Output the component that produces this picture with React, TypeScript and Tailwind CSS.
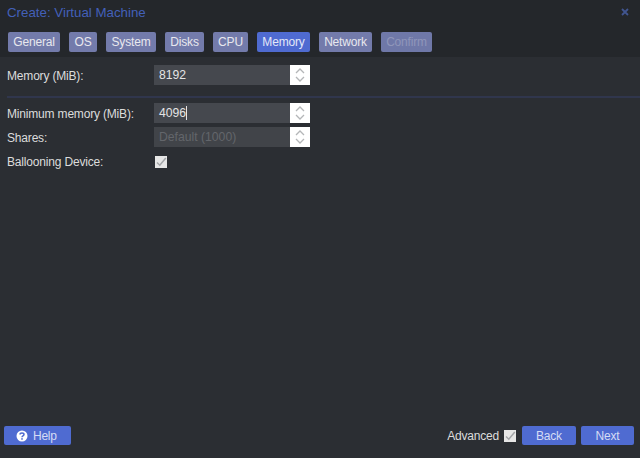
import React from "react";

const tabs = [
  { label: "General", w: "w-[52px]" },
  { label: "OS", w: "w-[28px]" },
  { label: "System", w: "w-[50px]" },
  { label: "Disks", w: "w-[39px]" },
  { label: "CPU", w: "w-[35px]" },
  { label: "Memory", w: "w-[53px]", active: true },
  { label: "Network", w: "w-[53px]" },
  { label: "Confirm", w: "w-[51px]", disabled: true },
];

function Check() {
  return (
    <span className="flex h-[12px] w-[12px] items-center justify-center bg-[#e6e6e6]">
      <svg width="12" height="12" viewBox="0 0 12 12" fill="none">
        <path d="M2 6.5 L4.8 9.2 L10.8 2" stroke="#a3a5a8" strokeWidth="1.5" />
      </svg>
    </span>
  );
}

function Spinner() {
  return (
    <div className="flex h-[20px] w-[20px] items-center justify-center bg-white">
      <svg width="12" height="16" viewBox="0 0 12 16" fill="none" stroke="#b4b6b8" strokeWidth="1.3">
        <path d="M2 6 L6 2 L10 6" />
        <path d="M2 10 L6 14 L10 10" />
      </svg>
    </div>
  );
}

function Field({ value, disabled, caret }: { value: string; disabled?: boolean; caret?: boolean }) {
  return (
    <div className="flex w-[156px]">
      <div
        className={`flex h-[20px] w-[136px] items-center pl-[5px] text-[12.2px] ${
          disabled ? "bg-[#414449] text-[#63666b]" : "bg-[#45484e] text-[#e4e4e4]"
        }`}
      >
        {value}
        {caret && <span className="h-[14px] w-px bg-[#e4e4e4]" />}
      </div>
      <Spinner />
    </div>
  );
}

function Row({ label, className, children }: { label: string; className?: string; children: React.ReactNode }) {
  return (
    <div className={`flex items-center pl-[7px] ${className ?? ""}`}>
      <span className="w-[147px] pt-[1px] text-[12px] tracking-[-0.18px] text-[#dcdcdc]">{label}</span>
      {children}
    </div>
  );
}

export default function App() {
  return (
    <div
      className="flex h-[458px] w-[640px] flex-col overflow-hidden bg-[#2b2e33]"
      style={{ fontFamily: '"Liberation Sans", Arial, sans-serif' }}
    >
      <header className="h-[57px] bg-[#24272b] pl-[8px] pr-[11px]">
        <div className="flex h-[32px] items-start justify-between pt-[4px]">
          <span className="-ml-[1px] mt-[1px] text-[13.3px] leading-[16px] text-[#4360b9]">Create: Virtual Machine</span>
          <svg width="8" height="8" viewBox="0 0 8 8" className="mt-[4px]" stroke="#41558f" strokeWidth="1.8">
            <path d="M1 1 L7 7 M7 1 L1 7" />
          </svg>
        </div>
        <nav className="flex gap-[9px]">
          {tabs.map((t) => (
            <span
              key={t.label}
              className={`flex h-[20px] items-center justify-center rounded-[2px] text-[12px] tracking-[-0.18px] ${t.w} ${
                t.active
                  ? "bg-[#4f6bd1] text-[#e3e8f8]"
                  : t.disabled
                    ? "bg-[#6f78a8] text-[#8f96ba]"
                    : "bg-[#737bab] text-[#e8e8ee]"
              }`}
            >
              {t.label}
            </span>
          ))}
        </nav>
      </header>

      <main className="flex-1 pt-[8px]">
        <Row label="Memory (MiB):">
          <Field value="8192" />
        </Row>
        <div className="ml-[7px] mt-[11px] h-[2px] bg-[#30364d]" />
        <Row label="Minimum memory (MiB):" className="mt-[5px]">
          <Field value="4096" caret />
        </Row>
        <Row label="Shares:" className="mt-[4px]">
          <Field value="Default (1000)" disabled />
        </Row>
        <Row label="Ballooning Device:" className="mt-[5px]">
          <span className="ml-[1px] mt-[1px]">
            <Check />
          </span>
        </Row>
      </main>

      <footer className="flex h-[32px] items-start justify-between pl-[4px] pr-[6px]">
        <button className="flex h-[19px] w-[67px] items-center justify-start gap-[5px] rounded-[2px] bg-[#4f6bd1] pl-[12px] text-[12px] tracking-[-0.25px] text-[#d5dcf5]">
          <svg width="12" height="12" viewBox="0 0 12 12">
            <circle cx="6" cy="6" r="5.5" fill="#ffffff" />
            <path d="M4 4.6 C4 2.4 8 2.4 8 4.6 C8 6 6 5.8 6 7.2" fill="none" stroke="#4f6bd1" strokeWidth="1.5" />
            <rect x="5.2" y="8.2" width="1.6" height="1.5" fill="#4f6bd1" />
          </svg>
          Help
        </button>
        <div className="flex items-center gap-[5px]">
          <span className="text-[12px] tracking-[-0.2px] text-[#dcdcdc]">Advanced</span>
          <Check />
          <button className="ml-[1px] h-[19px] w-[54px] rounded-[2px] bg-[#4f6bd1] text-[12px] tracking-[-0.2px] text-[#d5dcf5]">Back</button>
          <button className="h-[19px] w-[53px] rounded-[2px] bg-[#4f6bd1] text-[12px] tracking-[-0.2px] text-[#d5dcf5]">Next</button>
        </div>
      </footer>
    </div>
  );
}
